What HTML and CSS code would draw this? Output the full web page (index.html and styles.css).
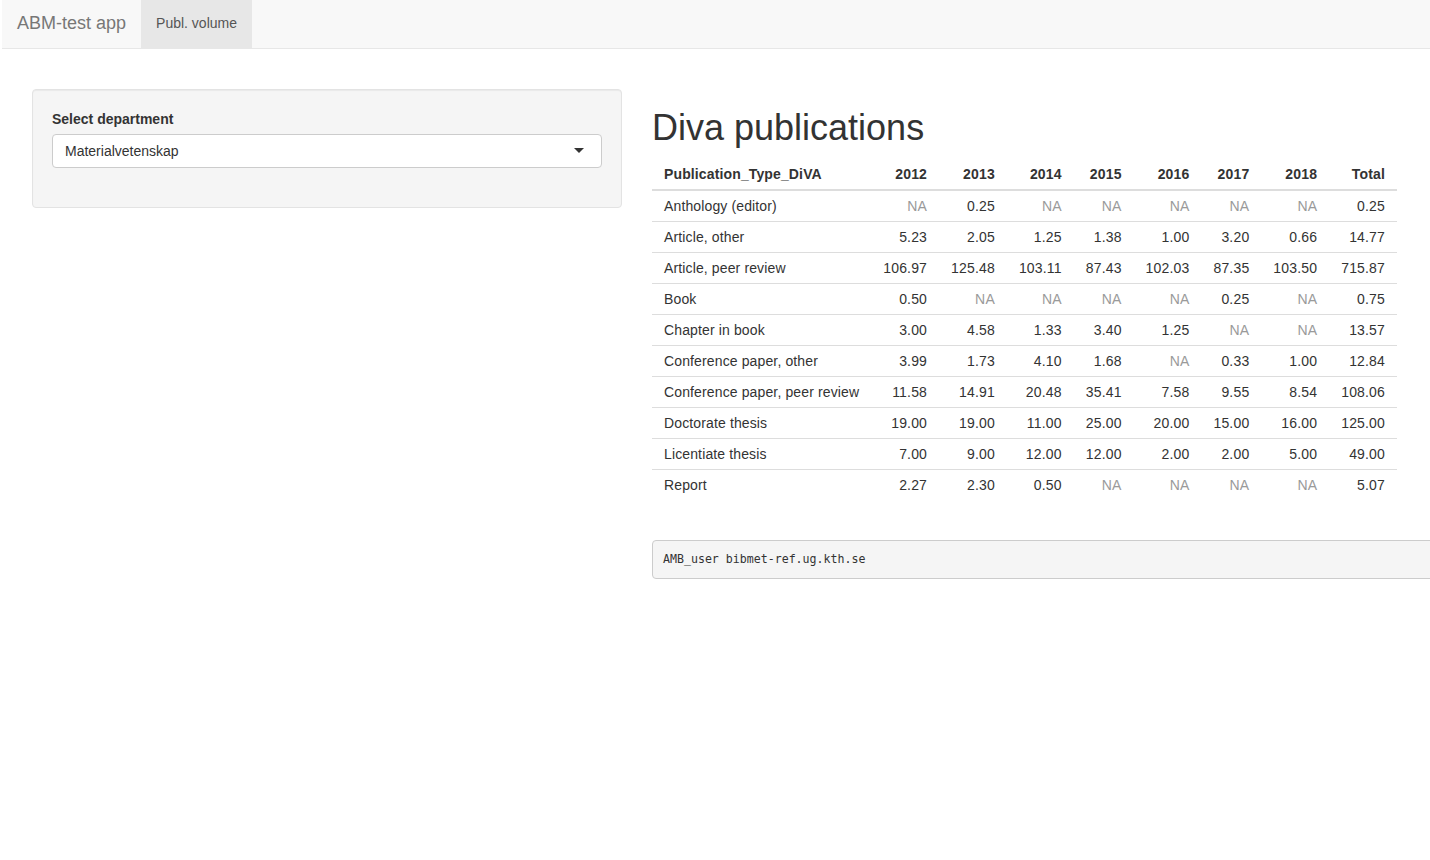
FILE: index.html
```html
<!DOCTYPE html>
<html lang="en">
<head>
<meta charset="utf-8">
<title>ABM-test app</title>
<link rel="stylesheet" href="styles.css">
</head>
<body>
<nav class="navbar">
  <span class="brand">ABM-test app</span>
  <span class="tab active">Publ. volume</span>
</nav>
<div class="layout">
  <aside class="sidebar">
    <form class="well">
      <label class="field-label">Select department</label>
      <div class="select-box">
        <span class="select-value">Materialvetenskap</span>
        <span class="caret"></span>
      </div>
    </form>
  </aside>
  <main class="main">
    <h1 class="title">Diva publications</h1>
    <table class="data-table">
      <thead>
        <tr><th class="txt">Publication_Type_DiVA</th><th>2012</th><th>2013</th><th>2014</th><th>2015</th><th>2016</th><th>2017</th><th>2018</th><th>Total</th></tr>
      </thead>
      <tbody>
        <tr><td class="txt">Anthology (editor)</td><td class="na">NA</td><td>0.25</td><td class="na">NA</td><td class="na">NA</td><td class="na">NA</td><td class="na">NA</td><td class="na">NA</td><td>0.25</td></tr>
        <tr><td class="txt">Article, other</td><td>5.23</td><td>2.05</td><td>1.25</td><td>1.38</td><td>1.00</td><td>3.20</td><td>0.66</td><td>14.77</td></tr>
        <tr><td class="txt">Article, peer review</td><td>106.97</td><td>125.48</td><td>103.11</td><td>87.43</td><td>102.03</td><td>87.35</td><td>103.50</td><td>715.87</td></tr>
        <tr><td class="txt">Book</td><td>0.50</td><td class="na">NA</td><td class="na">NA</td><td class="na">NA</td><td class="na">NA</td><td>0.25</td><td class="na">NA</td><td>0.75</td></tr>
        <tr><td class="txt">Chapter in book</td><td>3.00</td><td>4.58</td><td>1.33</td><td>3.40</td><td>1.25</td><td class="na">NA</td><td class="na">NA</td><td>13.57</td></tr>
        <tr><td class="txt">Conference paper, other</td><td>3.99</td><td>1.73</td><td>4.10</td><td>1.68</td><td class="na">NA</td><td>0.33</td><td>1.00</td><td>12.84</td></tr>
        <tr><td class="txt">Conference paper, peer review</td><td>11.58</td><td>14.91</td><td>20.48</td><td>35.41</td><td>7.58</td><td>9.55</td><td>8.54</td><td>108.06</td></tr>
        <tr><td class="txt">Doctorate thesis</td><td>19.00</td><td>19.00</td><td>11.00</td><td>25.00</td><td>20.00</td><td>15.00</td><td>16.00</td><td>125.00</td></tr>
        <tr><td class="txt">Licentiate thesis</td><td>7.00</td><td>9.00</td><td>12.00</td><td>12.00</td><td>2.00</td><td>2.00</td><td>5.00</td><td>49.00</td></tr>
        <tr><td class="txt">Report</td><td>2.27</td><td>2.30</td><td>0.50</td><td class="na">NA</td><td class="na">NA</td><td class="na">NA</td><td class="na">NA</td><td>5.07</td></tr>
      </tbody>
    </table>
    <pre class="verbatim">AMB_user bibmet-ref.ug.kth.se</pre>
  </main>
</div>
</body>
</html>
```
FILE: styles.css
```css
html, body {
  overflow: hidden;
}
body {
  margin: 0;
  padding-left: 2px;
  font-family: "Liberation Sans", Arial, sans-serif;
  font-size: 14px;
  line-height: 1.42857;
  color: #333;
  background: #fff;
  width: 1900px;
}
.navbar {
  display: flex;
  height: 48px;
  background: #f8f8f8;
  border-bottom: 1px solid #e7e7e7;
}
.brand {
  padding: 13px 15px 0;
  font-size: 18px;
  line-height: 20px;
  color: #777;
}
.tab {
  padding: 13px 15px 0;
  line-height: 20px;
  color: #555;
}
.tab.active {
  background: #e7e7e7;
}
.layout {
  display: flex;
  align-items: flex-start;
  gap: 30px;
  padding: 40px 0 0 30px;
}
.sidebar {
  width: 590px;
  flex: none;
}
.well {
  margin: 0;
  padding: 19px 19px 24px;
  background: #f5f5f5;
  border: 1px solid #e3e3e3;
  border-radius: 4px;
  box-shadow: inset 0 1px 1px rgba(0,0,0,.05);
  display: flex;
  flex-direction: column;
}
.field-label {
  font-weight: bold;
  margin-bottom: 5px;
  line-height: 20px;
}
.select-box {
  height: 34px;
  box-sizing: border-box;
  border: 1px solid #ccc;
  border-radius: 4px;
  background: #fff;
  padding: 6px 17px 6px 12px;
  display: flex;
  align-items: center;
  justify-content: space-between;
  margin-bottom: 15px;
  line-height: 20px;
}
.caret {
  width: 0;
  height: 0;
  border-top: 5px solid #333;
  border-left: 5px solid transparent;
  border-right: 5px solid transparent;
  margin-top: -2px;
}
.main {
  width: 1210px;
  flex: none;
}
.title {
  margin: 19px 0 11px;
  font-size: 36px;
  font-weight: 500;
  line-height: 1.1;
  color: #333;
}
.data-table {
  border-collapse: collapse;
  border-spacing: 0;
  margin-bottom: 20px;
}
.data-table th,
.data-table td {
  padding: 5px 12px;
  line-height: 20px;
  text-align: right;
  white-space: nowrap;
  letter-spacing: 0.17px;
}
.data-table th {
  font-weight: bold;
  border-bottom: 2px solid #ddd;
}
.data-table td {
  border-top: 1px solid #ddd;
}
.data-table .txt {
  text-align: left;
  letter-spacing: 0.13px;
}
.data-table .na {
  color: #9a9a9a;
}
.verbatim {
  margin: 40px 0 0;
  padding: 9.5px 10px;
  font-family: "DejaVu Sans Mono", "Liberation Mono", monospace;
  font-size: 11.6px;
  line-height: 18px;
  color: #333;
  background: #f5f5f5;
  border: 1px solid #ccc;
  border-radius: 4px;
}
```
